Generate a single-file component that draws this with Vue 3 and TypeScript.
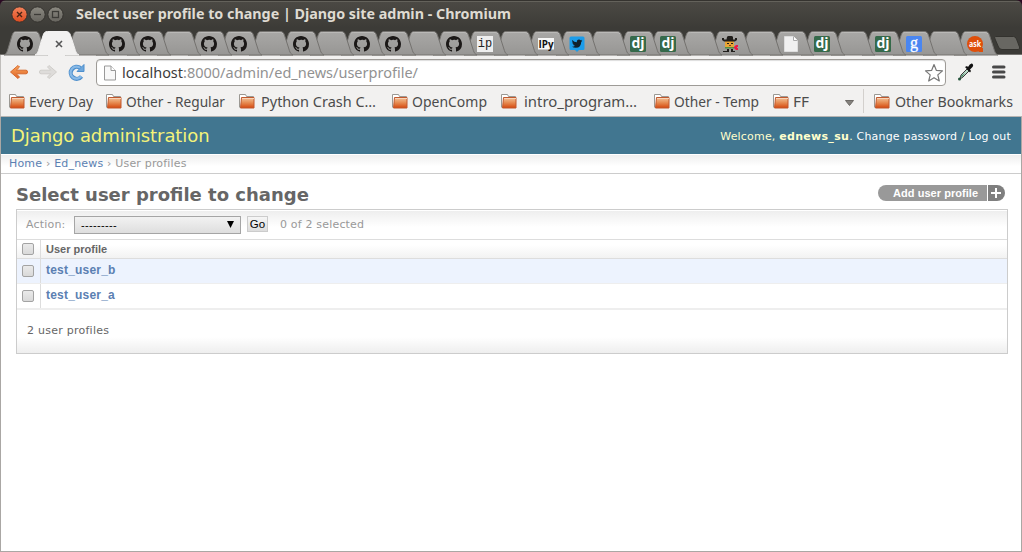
<script setup lang="ts">
type Fav = '' | 'gh' | 'ip' | 'ipy' | 'tw' | 'dj' | 'cow' | 'doc' | 'g' | 'ask' | 'close'

const icons: Fav[] = [
  'gh', 'close', '', 'gh', 'gh', '', 'gh', 'gh', '', 'gh', '', 'gh', 'gh', '', 'gh', 'ip',
  '', 'ipy', 'tw', '', 'dj', 'dj', '', 'cow', '', 'doc', 'dj', '', 'dj', 'g', '', 'ask',
]
const bookmarks = [
  { label: 'Every Day', w: 64, lead: 20, after: 13 },
  { label: 'Other - Regular', w: 99, lead: 20, after: 14 },
  { label: 'Python Crash C…', w: 115, lead: 22, after: 16 },
  { label: 'OpenComp', w: 75, lead: 20, after: 14 },
  { label: 'intro_program…', w: 113, lead: 23, after: 17 },
  { label: 'Other - Temp', w: 85, lead: 20, after: 14 },
  { label: 'FF', w: 16, lead: 20, after: 36 },
]
const users = ['test_user_b', 'test_user_a']
</script>

<template>
  <div class="window">
    <header class="titlebar">
      <svg class="controls" width="60" height="20" viewBox="0 0 60 20">
        <defs>
          <linearGradient id="red" x2="0" y2="1"><stop stop-color="#f4845c" /><stop offset="1" stop-color="#dd4b20" /></linearGradient>
          <linearGradient id="grey" x2="0" y2="1"><stop stop-color="#8b8981" /><stop offset="1" stop-color="#66645e" /></linearGradient>
        </defs>
        <circle cx="9.500" cy="9.500" r="7.700" fill="url(#red)" stroke="#33312d" />
        <circle cx="27.500" cy="9.500" r="7.700" fill="url(#grey)" stroke="#33312d" />
        <circle cx="45.500" cy="9.500" r="7.700" fill="url(#grey)" stroke="#33312d" />
        <path d="M7 7l5 5M12 7l-5 5" stroke="#4b2415" stroke-width="1.400" />
        <path d="M24 9.500h7" stroke="#3c3b37" stroke-width="1.300" />
        <rect x="42.500" y="6.500" width="6" height="6" fill="none" stroke="#3c3b37" stroke-width="1.300" />
      </svg>
      <svg class="title" width="440" height="24"><text x="0" y="15" textLength="435" lengthAdjust="spacingAndGlyphs">Select user profile to change | Django site admin - Chromium</text></svg>
    </header>

    <nav class="tabs">
      <svg width="0" height="0" class="defs">
        <defs>
          <linearGradient id="tabfill" x2="0" y2="1"><stop stop-color="#a9a8a6" /><stop offset="1" stop-color="#979694" /></linearGradient>
          <linearGradient id="folder" x2="0" y2="1"><stop stop-color="#f3c49c" /><stop offset=".5" stop-color="#e68a50" /><stop offset="1" stop-color="#d5480f" /></linearGradient>
          <linearGradient id="back" x2="0" y2="1"><stop stop-color="#f9a55a" /><stop offset="1" stop-color="#df6428" /></linearGradient>
        </defs>
      </svg>
      <div v-for="(icon, i) in icons" :key="i" class="tab" :style="{ zIndex: icon === 'close' ? 50 : 40 - i }">
        <svg class="shape" width="46" height="24" viewBox="0 0 46 24">
          <path
            d="M0 24C2 23 2.600 22 3.500 19.500L8 4.500C9 1.500 10 .5 12.500 .5H31C33.500 .5 34.600 1.500 35.600 4.500L40.400 19.500C41.200 22 42 23 44 24Z"
            :fill="icon === 'close' ? '#f2f1f0' : 'url(#tabfill)'"
            :stroke="icon === 'close' ? '#f2f1f0' : '#74726f'"
          />
          <path v-if="icon !== 'close'" d="M10 2.200Q10.800 1.500 12.500 1.500H31Q33 1.500 34 3" fill="none" stroke="#bab9b7" />
        </svg>
        <svg v-if="icon" class="fav" width="16" height="16" viewBox="0 0 16 16">
          <path v-if="icon === 'gh'" fill="#1b1817" d="M8 0C3.580 0 0 3.580 0 8c0 3.540 2.290 6.530 5.470 7.590.4.070.55-.17.55-.38v-1.490c-2.230.48-2.690-.94-2.690-.94-.36-.92-.89-1.170-.89-1.170-.72-.5.06-.49.06-.49.8.060 1.230.82 1.230.82.71 1.230 1.870.87 2.330.67.07-.52.28-.87.5-1.070-1.780-.2-3.640-.89-3.640-3.950 0-.87.31-1.590.82-2.150-.08-.2-.36-1.020.08-2.120 0 0 .67-.21 2.200.82A7.600 7.600 0 0 1 8 3.870c.68 0 1.360.09 2 .27 1.530-1.040 2.200-.82 2.200-.82.44 1.100.16 1.920.08 2.120.51.56.82 1.270.82 2.150 0 3.070-1.870 3.750-3.650 3.950.29.25.54.73.54 1.480v2.190c0 .21.15.46.55.38A8 8 0 0 0 16 8c0-4.420-3.580-8-8-8z" />
          <g v-else-if="icon === 'ip'"><rect width="16" height="16" fill="#eee" /><text x="8" y="11" text-anchor="middle" class="mono">ip</text></g>
          <g v-else-if="icon === 'ipy'"><rect y="2" width="16" height="11.500" fill="#f6f6f6" /><text x="8" y="11.500" text-anchor="middle" class="ipy" textLength="15" lengthAdjust="spacingAndGlyphs">IPy</text></g>
          <g v-else-if="icon === 'tw'">
            <path d="M2 .5h12q1.500 0 1.500 1.500v10.500q0 1.500-1.500 1.500h-4l-2 2-2-2H2q-1.500 0-1.500-1.500V2Q.5.5 2 .5z" fill="#1c9cea" />
            <path d="M3.200 4q2 2.200 4.600 2.300Q7.700 3.500 10 3.500q1 0 1.600.7l1.500-.5-.8 1.200 1-.2-1.100 1.200q0 5.600-5.400 5.900-2.200 0-3.800-1 2 0 3-1-1.600-.2-2-1.500h.9Q3.200 7.700 3.200 6.200l.9.2Q2.500 5.200 3.200 4z" fill="#10202c" />
          </g>
          <g v-else-if="icon === 'dj'"><rect width="16" height="16" rx="1.500" fill="#35694a" /><text x="8" y="12.300" text-anchor="middle" class="dj">dj</text></g>
          <g v-else-if="icon === 'cow'">
            <rect x="3" y="5" width="9" height="7" rx="1" fill="#e9a534" />
            <path d="M0 2h2v1.500h2.500L5 1Q5.500 0 6.500 0h3q1 0 1.500 1v2.500h2V2h2v2l-2 1.500H2L0 4z" fill="#211e1b" />
            <path d="M5 7h2v1H5zM9 7h2v1H9zM5 13h2v3H1v-1h4zM9 13h2v2h2v1H9z" fill="#211e1b" />
            <path d="M7 9h2v1H7z" fill="#8a431b" /><path d="M3 11h9v1.500H3z" fill="#539044" />
            <path d="M12 11l2-2h2v2h-1v1h1v2h-2l-2-2z" fill="#ec1845" />
          </g>
          <g v-else-if="icon === 'doc'"><path d="M1.500.5h9l4 4v11h-13z" fill="#f0f0f0" stroke="#ddd" /><path d="M10.500.5v4h4" fill="#fff" stroke="#aaa" /></g>
          <g v-else-if="icon === 'g'"><rect width="16" height="16" rx="1.500" fill="#4a86f1" /><text x="8" y="11.500" text-anchor="middle" class="goog">g</text></g>
          <g v-else-if="icon === 'ask'"><circle cx="8" cy="8" r="8" fill="#df4f0a" /><path d="M9 12h7v4h-4z" fill="#df4f0a" /><text x="8" y="10.700" text-anchor="middle" class="ask" textLength="12" lengthAdjust="spacingAndGlyphs">ask</text></g>
          <path v-else d="M8 5l6 6M14 5l-6 6" stroke="#555" stroke-width="1.600" />
        </svg>
      </div>
      <svg class="newtab" width="28" height="17" viewBox="0 0 28 17"><path d="M2.500 1.500h18q2 0 3 2.500l3 8q1 2.500-1.500 2.500H9q-2.500 0-3.500-2.500L2 4Q1 1.500 2.500 1.500z" fill="#686762" stroke="#33322e" /></svg>
    </nav>

    <div class="toolbar">
      <svg class="nav" width="96" height="30" viewBox="0 0 96 30">
        <path d="M10.500 17L18 10.500l1.500 1.500-3.200 3.200H26q1.500 0 1.500 1.800T26 18.800h-9.700l3.200 3.200L18 23.500z" fill="url(#back)" stroke="#d66a2e" />
        <path d="M56.500 17L49 10.500 47.500 12l3.200 3.200H41q-1.500 0-1.500 1.800t1.500 1.800h9.700L47.500 22l1.500 1.500z" fill="#dedcda" stroke="#d0ceca" />
        <path d="M81.500 21.500a6 6 0 1 1-1.100-8.500" fill="none" stroke="#4d8fcd" stroke-width="4.200" />
        <path d="M81.300 21.300a6 6 0 1 1-.9-8.300" fill="none" stroke="#88b9e6" stroke-width="2.200" />
        <path d="M84 9.500v7h-7z" fill="#6ea7dc" stroke="#4d8fcd" />
      </svg>
      <div class="omnibox">
        <svg class="page" width="14" height="17" viewBox="0 0 14 17"><path d="M1.500 1h6.500l4.500 4.500v9.500h-11z" fill="#f8f8f8" stroke="#999" /><path d="M8 1v4.500h4.500" fill="#fff" stroke="#999" /></svg>
        <svg class="url" width="320" height="24"><text y="16" fill="#3c3c3c" textLength="61" lengthAdjust="spacingAndGlyphs">localhost</text><text x="61" y="16" fill="#929292" textLength="235" lengthAdjust="spacingAndGlyphs">:8000/admin/ed_news/userprofile/</text></svg>
        <svg class="star" width="20" height="20" viewBox="0 0 20 20"><path d="M10 1.500l2.400 5.900 6.100.5-4.700 4 1.500 6.100L10 14.700 4.700 18l1.500-6.100-4.700-4 6.100-.5z" fill="#fff" stroke="#777" stroke-width="1.200" stroke-linejoin="round" /></svg>
      </div>
      <svg class="picker" width="17" height="19" viewBox="0 0 17 19">
        <path d="M3 16l1-4 6-6 2 2-6 6z" fill="#b6d6c5" stroke="#383838" /><path d="M4 13l4-3-3 4z" fill="#347d56" />
        <path d="M8 4l2-1 1 1q2-4 4-3.500Q17 2 15.500 4L13 6.500l1 1.500-1 1.500z" fill="#111" /><circle cx="2.500" cy="16" r="1.500" fill="#25553c" />
      </svg>
      <svg class="menu" width="14" height="14" viewBox="0 0 14 14"><path d="M1.500 2h10.500M1.500 7h10.500M1.500 12h10.500" stroke="#484848" stroke-width="3" stroke-linecap="round" /></svg>
    </div>

    <div class="bookmarks">
      <div v-for="b in bookmarks" :key="b.label" class="bm" :style="{ width: b.w + b.lead + 'px', marginRight: b.after + 'px' }">
        <svg class="folder" width="17" height="16" viewBox="0 0 17 16"><path d="M.5 13.500V.5h6l1 2h7v3" fill="#fff" stroke="#9b9893" /><path d="M2.500 3.500h12.500v10.500H1.500z" fill="url(#folder)" stroke="#c0592f" /><path d="M3 4.500h12" stroke="#f8d3b6" /></svg>
        <svg class="label" :width="b.w" height="22"><text y="16" :textLength="b.w" lengthAdjust="spacingAndGlyphs">{{ b.label }}</text></svg>
      </div>
      <svg class="chev" width="9" height="6"><path d="M.5.5h8l-4 5z" fill="#85827e" stroke="#6c6965" /></svg>
      <i class="vr" />
      <div class="bm other">
        <svg class="folder" width="17" height="16" viewBox="0 0 17 16"><path d="M.5 13.500V.5h6l1 2h7v3" fill="#fff" stroke="#9b9893" /><path d="M2.500 3.500h12.500v10.500H1.500z" fill="url(#folder)" stroke="#c0592f" /><path d="M3 4.500h12" stroke="#f8d3b6" /></svg>
        <svg class="label" width="118" height="22"><text y="16" textLength="118" lengthAdjust="spacingAndGlyphs">Other Bookmarks</text></svg>
      </div>
    </div>

    <main class="page-body">
      <div class="dj-header">
        <h1>Django administration</h1>
        <div class="usertools">Welcome, <b>ednews_su</b>. <a>Change password</a> / <a>Log out</a></div>
      </div>
      <div class="crumbs"><a>Home</a> › <a>Ed_news</a> › User profiles</div>
      <div class="content">
        <div class="heading">
          <h2>Select user profile to change</h2>
          <div class="add"><span class="add-label">Add user profile</span><span class="plus" /></div>
        </div>
        <section class="module">
          <div class="actions">
            <span class="act">Action:</span>
            <div class="select"><span>---------</span><svg width="7" height="8"><path d="M0 0h7L3.500 7z" /></svg></div>
            <button>Go</button>
            <span class="count">0 of 2 selected</span>
          </div>
          <div class="row head"><div class="cb"><i /></div><div class="cell">User profile</div></div>
          <div v-for="u in users" :key="u" class="row user"><div class="cb"><i /></div><div class="cell">{{ u }}</div></div>
          <div class="paginator">2 user profiles</div>
        </section>
      </div>
    </main>
  </div>
</template>

<style>
body { margin: 0; overflow: hidden; }
</style>

<style scoped>
.window { box-sizing: border-box; width: 1022px; height: 552px; background: linear-gradient(#2a0a22 8px, #fff 8px); font-family: "DejaVu Sans", sans-serif; overflow: hidden; }
.titlebar { display: flex; height: 31px; background: linear-gradient(#35332f 0, #35332f 1px, #64625b 1px, #64625b 2px, #4b4944 2px, #3c3b37 28px); border-radius: 6px 6px 0 0; }
.controls { margin: 5px 6px 0 10px; }
.title { margin-top: 4px; overflow: visible; font: bold 14.500px "Noto Sans", sans-serif; fill: #dfdbd2; }
.tabs { display: flex; height: 24px; padding-left: 4px; background: linear-gradient(#3c3b37 23px, #74726f 23px); }
.defs { position: absolute; }
.tab { position: relative; flex: 0 0 30.650px; width: 30.650px; min-width: 0; height: 24px; }
.shape { display: block; overflow: visible; }
.fav { position: absolute; left: 13px; top: 5px; overflow: visible; }
.newtab { flex: none; margin: 4px 0 0 8px; }
.mono { font: 12px "Liberation Mono", monospace; fill: #222; }
.ipy { font: bold 10px "Open Sans", sans-serif; fill: #111; }
.dj { font: bold 14px "Open Sans", sans-serif; fill: #fff; }
.goog { font: 16px "Liberation Serif", serif; fill: #fff; stroke: #fff; stroke-width: .3px; }
.ask { font: bold 8px "Open Sans", sans-serif; fill: #fff; }
.toolbar { display: flex; height: 33px; background: #f2f1f0; border-left: 1px solid #c0bebb; }
.nav { margin: 0 0 0 -1px; }
.omnibox { box-sizing: border-box; display: flex; width: 850px; height: 27px; margin-top: 4px; background: #fff; border: 1px solid #9e9b97; border-radius: 4px; box-shadow: inset 0 1px 1px #ddd; }
.page { margin: 5px 5px 0 6px; }
.url { margin: 2px auto 0 0; font: 15px "Noto Sans", sans-serif; overflow: visible; }
.star { margin: 3px 1px 0 0; }
.picker { margin: 8px 0 0 11px; }
.menu { margin: 10px 0 0 18px; }
.bookmarks { display: flex; height: 28px; padding-left: 8px; background: #f2f1f0; border-left: 1px solid #c0bebb; border-bottom: 1px solid #b6b4b2; }
.bm { display: flex; flex: none; justify-content: space-between; height: 24px; margin-top: 3px; }
.folder { flex: none; margin-top: 3px; }
.label { font: 14px "Noto Sans", sans-serif; fill: #4c4c4c; overflow: visible; }
.chev { margin: 12px 9px 0 0; }
.vr { height: 24px; width: 1px; margin: 1px 10px 0 0; background: #d3d0cd; }
.other { width: 138.500px; }
.page-body { box-sizing: border-box; height: 435px; border: 1px solid #aaa7a4; border-top: 0; background: #fff; }
.dj-header { display: flex; justify-content: space-between; align-items: center; height: 37px; padding: 0 10px 0 10px; background: #417690; color: #ffc; }
h1 { margin: 0; font-size: 18px; font-weight: 400; letter-spacing: -.08px; color: #f4f379; }
.usertools { padding-top: 1px; font-size: 11px; letter-spacing: .19px; white-space: nowrap; }
.usertools b { letter-spacing: .3px; }
.usertools a { color: #fff; }
.crumbs { box-sizing: border-box; height: 20px; padding: 3px 8px; font-size: 11px; line-height: 13px; letter-spacing: .18px; color: #999; border-bottom: 1px solid #ccc; background: linear-gradient(#fff 0, #fff 1px, #eee 1px, #fff 12px); }
.crumbs a { color: #5b80b2; }
.content { padding: 0 13px 0 15px; }
.heading { display: flex; justify-content: space-between; height: 35px; }
h2 { margin: 10px 0 0; color: #666; font-size: 18px; line-height: 22px; }
.add { display: flex; gap: 1px; height: 16px; margin: 11px 3px 0 0; border-radius: 8px; overflow: hidden; font: bold 11px/17px "Liberation Sans", sans-serif; color: #fff; }
.add-label { width: 85px; padding: 0 9px 0 15px; background: #999; white-space: nowrap; letter-spacing: .05px; }
.plus { width: 17px; background: linear-gradient(#fff, #fff) 3px 7px / 10px 2px no-repeat, linear-gradient(#fff, #fff) 7px 3px / 2px 10px no-repeat, #7f7f7f; }
.module { border: 1px solid #ccc; }
.actions { display: flex; height: 29px; border-bottom: 1px solid #ddd; color: #999; font-size: 11px; line-height: 29px; letter-spacing: .18px; background: linear-gradient(#fff 0, #fff 1px, #eee 1px, #fff 17px); }
.act { width: 48px; margin-left: 9px; }
.select { box-sizing: border-box; display: flex; align-items: center; justify-content: space-between; width: 167px; height: 18px; margin-top: 6px; padding: 0 6px; border: 1px solid #a5a5a5; background: linear-gradient(#f2f2f2, #dedede); color: #000; font: 11px "Liberation Sans", sans-serif; letter-spacing: .35px; }
button { width: 21px; height: 16px; margin: 6px 12px 0 6px; padding: 0; border: 1px solid #ccc; background: linear-gradient(#f6f6f6, #ddd); font: 11.500px/14px "Liberation Sans", sans-serif; color: #000; }
.row { display: flex; box-sizing: border-box; font: bold 12px "Liberation Sans", sans-serif; color: #5b80b2; }
.head { height: 19px; font-size: 11px; color: #666; border-bottom: 1px solid #ddd; background: linear-gradient(#fff 5px, #f2f2f2); }
.user { height: 25px; letter-spacing: .2px; border-bottom: 1px solid #eee; background: #edf3fe; }
.user + .user { background: #fff; height: 26px; border-bottom-width: 2px; }
.cb { width: 23px; border-right: 1px solid #ddd; }
.cb i { display: block; box-sizing: border-box; width: 12px; height: 12px; margin: 3px 0 0 5px; border: 1px solid #a3a3a3; border-radius: 2px; background: linear-gradient(#eaeaea, #d9d9d9); }
.user .cb i { margin-top: 6px; }
.cell { padding-left: 5px; line-height: 19px; }
.user .cell { line-height: 22px; }
.paginator { height: 43px; padding-left: 10px; font-size: 11px; line-height: 41px; letter-spacing: .25px; color: #666; background: linear-gradient(#fff 27px, #eee); }
</style>
